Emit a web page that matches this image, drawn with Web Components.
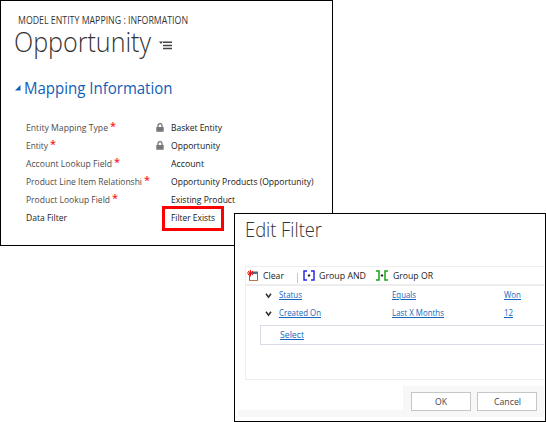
<!DOCTYPE html>
<html lang="en">
<head>
<meta charset="utf-8">
<title>Model Entity Mapping</title>
<style>
html,body{margin:0;background:#fff}
body{font-family:"Open Sans","Noto Sans",sans-serif;font-size:9.6px;color:#222;width:546px;height:422px;overflow:hidden}
.desk{display:grid}
.desk>*{grid-area:1/1}
</style>
</head>
<body>
<div class="desk">
<entity-form></entity-form>
<filter-dialog></filter-dialog>
</div>
<script>
const make=(host,html)=>{const t=document.createElement('template');t.innerHTML=html;host.attachShadow({mode:'open'}).append(t.content.cloneNode(true));return host.shadowRoot};

/* Text set to a given measure: w is the width in pixels. */
class FitText extends HTMLElement{
  constructor(){super();make(this,`<style>:host{display:block;flex:none;white-space:nowrap}span{display:inline-block;transform-origin:0 50%}:host([link]) span{text-decoration:underline;text-underline-offset:1px;text-decoration-thickness:1px}:host([link]){color:#1867bd}</style><span><slot></slot></span>`)}
  connectedCallback(){const w=+this.getAttribute('w');this.style.width=w+'px';const s=this.shadowRoot.querySelector('span');const n=s.getBoundingClientRect().width;if(n)s.style.transform=`scaleX(${w/n})`}
}
class LockIcon extends HTMLElement{
  constructor(){super();make(this,`<style>:host{display:block;width:8px;height:9px;margin:-2px 0 0 -1px}svg{display:block}</style><svg width="8" height="9" viewBox="0 0 8 9"><path d="M2 4.5V2.6a2 2 0 0 1 4 0v1.9" fill="none" stroke="#777" stroke-width="1.3"/><rect x=".3" y="4" width="7.4" height="4.8" rx=".4" fill="#777"/></svg>`)}
}
class FieldRow extends HTMLElement{
  constructor(){super();
    const a=n=>this.getAttribute(n);
    make(this,`<style>:host{display:grid;grid-template-columns:131px 14px 1fr;height:18px;align-items:center;line-height:14px}
    .l{display:flex;gap:2px;color:${a('dark')!==null?'#222':'#4c4c4c'}}.s{color:#f22;font-size:11px;line-height:11px;height:11px;font-weight:600;margin-top:-1px}
    .v{position:relative;color:#161616}.hot{position:absolute;left:-9.5px;top:-5px;width:56px;height:19px;border:3px solid #f00}</style>
    <div class="l"><fit-text w="${a('lw')}">${a('label')}</fit-text>${a('req')!==null?'<span class="s">*</span>':''}</div>
    <div>${a('lock')!==null?'<lock-icon></lock-icon>':''}</div>
    <div class="v"><fit-text w="${a('vw')}">${a('value')}</fit-text>${a('hot')!==null?'<div class="hot"></div>':''}</div>`)}
}
class EntityForm extends HTMLElement{
  constructor(){super();make(this,`<style>:host{display:block;box-sizing:border-box;width:333px;height:246px;border:1px solid #000;background:#fff}
  .crumb{padding:12px 0 0 17px;line-height:14px;color:#333;font-size:10px}
  .title{display:flex;align-items:center;gap:8px;padding-left:13px;height:30px;font-size:27px;font-weight:300;line-height:30px;color:#333}
  .title fit-text{margin-top:-1px}
  .title svg{margin:7px 0 0 0}
  .section{display:flex;align-items:center;gap:3px;padding-left:13.5px;height:24px;margin-top:19px;color:#1160b7;font-size:16px;line-height:24px}
  .fields{padding:19px 0 0 25px}</style>
  <div class="crumb"><fit-text w="170">MODEL ENTITY MAPPING : INFORMATION</fit-text></div>
  <div class="title"><fit-text w="137">Opportunity</fit-text><svg width="14" height="9" viewBox="0 0 14 9"><path d="M0 .5h4L2 3z" fill="#444"/><path d="M4 1.3h9M4 4.4h9M4 7.5h9" stroke="#444" stroke-width="1.5"/></svg></div>
  <div class="section"><svg width="6" height="6"><path d="M5.5 0v5.5H0z" fill="#1160b7"/></svg><fit-text w="148.5">Mapping Information</fit-text></div>
  <div class="fields">
  <field-row label="Entity Mapping Type" lw="82" req lock value="Basket Entity" vw="51"></field-row>
  <field-row label="Entity" lw="22" req lock value="Opportunity" vw="49"></field-row>
  <field-row label="Account Lookup Field" lw="86" req value="Account" vw="33"></field-row>
  <field-row label="Product Line Item Relationshi" lw="116" req value="Opportunity Products (Opportunity)" vw="142.5"></field-row>
  <field-row label="Product Lookup Field" lw="84" req value="Existing Product" vw="64"></field-row>
  <field-row label="Data Filter" lw="41" dark value="Filter Exists" vw="44" hot></field-row>
  </div>`)}
}
class CriteriaRow extends HTMLElement{
  constructor(){super();const a=n=>this.getAttribute(n);make(this,`<style>:host{display:grid;grid-template-columns:14px 112.5px 112.5px 1fr;height:18.5px;align-items:center;line-height:14px;padding-left:19px}fit-text{margin-top:-2px}</style>
  <svg width="8" height="6"><path d="M1 .8 3.5 4.2 6 .8" fill="none" stroke="#333" stroke-width="1.6"/></svg>
  <fit-text link w="${a('fw')}">${a('field')}</fit-text><fit-text link w="${a('ow')}">${a('op')}</fit-text><fit-text link w="${a('vw')}">${a('value')}</fit-text>`)}
}
class DialogButton extends HTMLElement{
  constructor(){super();make(this,`<style>:host{box-sizing:border-box;display:flex;width:60px;height:19px;border:1px solid #c6c6c6;background:#fff;align-items:center;justify-content:center;color:#444;line-height:14px}</style><slot></slot>`)}
}
class FilterDialog extends HTMLElement{
  constructor(){super();make(this,`<style>:host{display:block;box-sizing:border-box;width:312px;height:209px;margin:213px 0 0 234px;border:1px solid #000;background:#fff;z-index:1;overflow:hidden}
  .h{padding:2px 0 0 10px;height:49px;box-sizing:border-box;font-size:20px;font-weight:300;line-height:28px;color:#333}
  .ed{box-sizing:border-box;margin:3px 0 0 10px;width:299px;height:114px;border:1px solid #eee;border-right:0}
  .bar{box-sizing:border-box;height:19px;border-bottom:2px solid #ededed;display:grid;grid-template-columns:17px 34px 6px 16px 57px 17px 1fr;align-items:center;line-height:14px;color:#222}
  .sep{width:1px;height:10px;background:#c5c8d0;margin-top:5px}
  .rows{padding-top:.5px}
  .sel{box-sizing:border-box;height:20px;margin:1px 0 0 14px;border:1px solid #d9dce4;border-right:0;padding-left:19px;display:flex;align-items:center;line-height:14px}
  .foot{display:grid;grid-template-columns:165px 141px;margin:6px 0 0 3px;height:31px;align-items:end}
  .strip{height:7px;background:#f7f7f7}
  .btns{box-sizing:border-box;height:31px;background:#f7f7f7;display:flex;gap:6px;padding:6px 0 0 8px}</style>
  <div class="h"><fit-text w="77">Edit Filter</fit-text></div>
  <div class="ed">
  <div class="bar">
  <svg width="13" height="12"><path d="M3.5 3.5h8v7h-8z" fill="#fff" stroke="#5a7590"/><path d="M6 2.5h6" stroke="#536b80" stroke-width="2"/><path d="M3 10.5h9" stroke="#b77952"/><path d="M4.5 0v6.5M2 1l5 4M7 1 2 5M1 3h7" stroke="#e11" stroke-width="1"/></svg>
  <fit-text w="21">Clear</fit-text><div class="sep"></div>
  <svg width="12" height="12"><path d="M4 1H1v9h3M8 1h3v9H8" fill="none" stroke="#2828ef" stroke-width="1.5"/><path d="M6 4 7.5 5.5 6 7 4.5 5.5z" fill="#222"/></svg>
  <fit-text w="47">Group AND</fit-text>
  <svg width="13" height="12"><path d="M0 1h3v9H0M12 1H9v9h3" fill="none" stroke="#15a515" stroke-width="1.5"/><path d="M6 4 7.5 5.5 6 7 4.5 5.5z" fill="#222"/></svg>
  <fit-text w="40">Group OR</fit-text></div>
  <div class="rows"><criteria-row field="Status" fw="23" op="Equals" ow="24" value="Won" vw="17"></criteria-row>
  <criteria-row field="Created On" fw="42" op="Last X Months" ow="52" value="12" vw="9"></criteria-row></div>
  <div class="sel"><fit-text link w="24">Select</fit-text></div>
  </div>
  <div class="foot"><div class="strip"></div><div class="btns"><dialog-button><fit-text w="12">OK</fit-text></dialog-button><dialog-button><fit-text w="27">Cancel</fit-text></dialog-button></div></div>`)}
}
customElements.define('fit-text',FitText);
customElements.define('lock-icon',LockIcon);
customElements.define('field-row',FieldRow);
customElements.define('criteria-row',CriteriaRow);
customElements.define('dialog-button',DialogButton);
customElements.define('entity-form',EntityForm);
customElements.define('filter-dialog',FilterDialog);
</script>
</body>
</html>
